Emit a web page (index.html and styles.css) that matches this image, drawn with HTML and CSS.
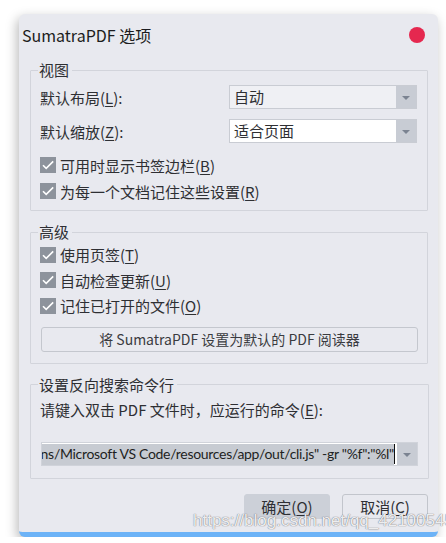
FILE: index.html
```html
<!DOCTYPE html>
<html lang="zh-CN">
<head>
    <meta charset="UTF-8">
    <title>SumatraPDF 选项</title>
    <link rel="stylesheet" href="styles.css">
</head>
<body>
    <div class="window">
        <div class="titlebar">
            <span class="title">SumatraPDF 选项</span>
            <span class="close"></span>
        </div>

        <!-- 视图 -->
        <fieldset class="group view">
            <legend>视图</legend>
            <div class="row">
                <span class="label">默认布局(<u>L</u>):</span>
                <div class="select grey"><span class="val">自动</span><span class="arrow"></span></div>
            </div>
            <div class="row">
                <span class="label">默认缩放(<u>Z</u>):</span>
                <div class="select"><span class="val">适合页面</span><span class="arrow"></span></div>
            </div>
            <div class="checks first">
                <label class="check"><span class="box"></span>可用时显示书签边栏(<u>B</u>)</label>
                <label class="check"><span class="box"></span>为每一个文档记住这些设置(<u>R</u>)</label>
            </div>
        </fieldset>

        <!-- 高级 -->
        <fieldset class="group advanced">
            <legend>高级</legend>
            <div class="checks">
                <label class="check"><span class="box"></span>使用页签(<u>T</u>)</label>
                <label class="check"><span class="box"></span>自动检查更新(<u>U</u>)</label>
                <label class="check"><span class="box"></span>记住已打开的文件(<u>O</u>)</label>
            </div>
            <button class="wide">将 SumatraPDF 设置为默认的 PDF 阅读器</button>
        </fieldset>

        <!-- 反向搜索 -->
        <fieldset class="group">
            <legend>设置反向搜索命令行</legend>
            <div class="hint">请键入双击 PDF 文件时，应运行的命令(<u>E</u>):</div>
            <div class="select combo">
                <span class="val"><span class="sel">ns/Microsoft VS Code/resources/app/out/cli.js" -gr "%f":"%l"</span><span class="caret"></span></span>
                <span class="arrow"></span>
            </div>
        </fieldset>

        <div class="actions">
            <button class="btn ok">确定(<u>O</u>)</button>
            <button class="btn">取消(<u>C</u>)</button>
        </div>

        <div class="watermark">https://blog.csdn.net/qq_42100545</div>
    </div>
</body>
</html>
```

FILE: styles.css
```css
/* SumatraPDF 选项对话框 */
body { margin: 0; padding-top: 14px; background: #fff; font-family: "Noto Sans CJK SC", "Noto Sans", sans-serif; color: #2e2f33; overflow: hidden; }
.window { position: relative; margin-left: 19px; width: 419px; height: 518px; background: #e8e9ef; border-bottom: 5px solid #6cb3f7; border-radius: 6px; box-shadow: -2px 4px 12px rgba(0, 0, 0, 0.28); }
.titlebar { height: 42px; padding: 0 13px 5px 3px; display: flex; align-items: center; justify-content: space-between; }
.title { font-size: 16px; color: #1b1c20; }
.close { width: 16px; height: 16px; border-radius: 50%; background: #e5284f; }
.group { margin: 0 10px 0 11px; padding: 5px 10px 5px 9px; border: 1px solid #d2d4db; border-radius: 1px; }
.group + .group { margin-top: 12px; }
.group.view { padding-top: 6px; padding-bottom: 6px; }
.group.advanced { padding-top: 1px; }
.group legend { padding: 0 3px 0 1px; margin-left: -2px; font-size: 15px; line-height: 18px; color: #2e2f33; }
.row { display: flex; align-items: center; justify-content: space-between; height: 24px; font-size: 15px; }
.row + .row { margin-top: 10px; }
.select { display: flex; width: 188px; height: 24px; box-sizing: border-box; border: 1px solid #c9ccd3; background: #fff; font-size: 15px; }
.select.grey { background: #eff0f4; }
.select .val { flex: 1; min-width: 0; padding-left: 4px; line-height: 22px; overflow: hidden; white-space: nowrap; }
.select .arrow { flex: none; width: 20px; background: #c8ccd4; position: relative; }
.select .arrow::after { content: ""; position: absolute; left: 6px; top: 10px; border-left: 4px solid transparent; border-right: 4px solid transparent; border-top: 4px solid #7b8391; }
.checks.first { margin-top: 9px; }
.check { display: flex; align-items: center; height: 26px; font-size: 15px; }
.advanced .check { height: 25.5px; }
.box { width: 16px; height: 16px; margin-right: 4px; background: #8d939c url("data:image/svg+xml,%3Csvg xmlns='http://www.w3.org/2000/svg' viewBox='0 0 16 16'%3E%3Cpath d='M3 8.2l3.2 3.2L13.2 4.4' fill='none' stroke='%23fff' stroke-width='1.6'/%3E%3C/svg%3E") no-repeat center; }
.wide { display: block; width: 100%; height: 25px; margin: 8px 0 6px 1px; border: 1px solid #c4c7ce; border-radius: 3px; background: #e8e9ef; font-family: inherit; font-size: 14px; color: #3a3b40; padding: 0; }
.hint { font-size: 15px; line-height: 22px; }
.combo { width: 377px; margin: 21px 0 7px 1px; border-color: #d0d3da; }
.combo .val { display: flex; justify-content: flex-end; padding: 0 2px 0 0; font-family: Lato, "Noto Sans", sans-serif; font-size: 14px; letter-spacing: -0.3px; color: #1e1f22; }
.combo .sel { flex: none; background: #c7cbd2; white-space: nowrap; line-height: 20px; margin-top: 1px; }
.caret { width: 1px; height: 20px; margin-top: 1px; background: #111; flex: none; }
.actions { display: flex; justify-content: flex-end; gap: 12px; margin: 15px 10px 0 0; }
.btn { width: 86px; height: 25px; border: 1px solid #c2c5cc; border-radius: 3px; background: #e8e9ef; font-family: inherit; font-size: 15px; color: #2e2f33; padding: 0; }
.btn.ok { background: #ccd0d8; border-color: #ccd0d8; }
.watermark { position: absolute; left: 174px; top: 497px; font-family: "Liberation Sans", sans-serif; font-size: 17px; color: rgba(255, 255, 255, 0.9); text-shadow: 0 0 1px rgba(80, 80, 90, 0.75), 0 0 1px rgba(80, 80, 90, 0.5); white-space: nowrap; }
u { text-decoration-thickness: 1px; text-underline-offset: 2px; }
```
